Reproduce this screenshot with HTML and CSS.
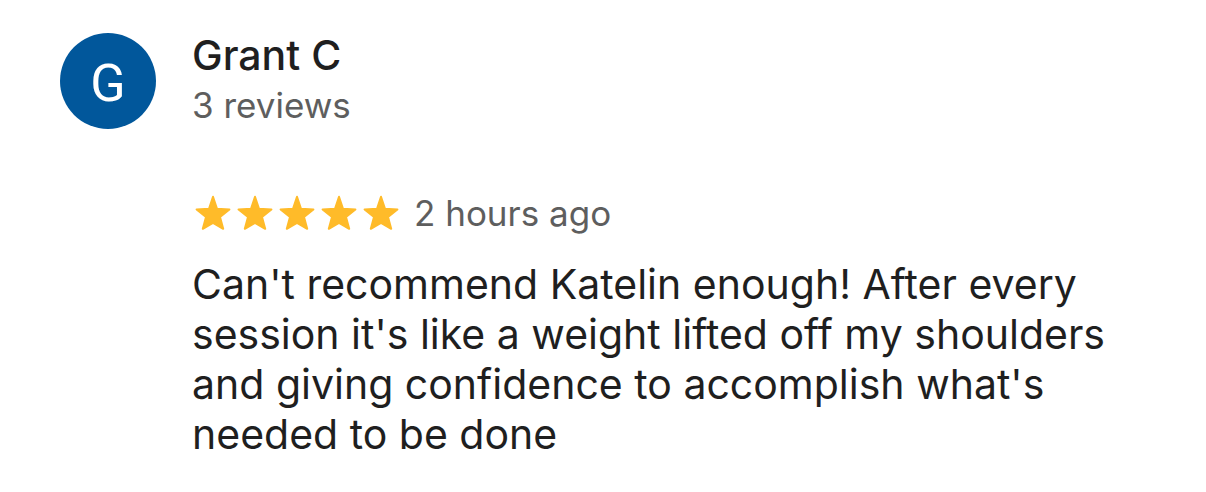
FILE: index.html
```
<!DOCTYPE html>
<html lang="en">
<head>
    <meta charset="UTF-8">
    <meta name="viewport" content="width=device-width, initial-scale=1.0">
    <title>Review by Grant C</title>
    <link rel="stylesheet" href="styles.css">
</head>
<body>
    <svg class="sprite" aria-hidden="true">
        <symbol id="star" viewBox="0 0 36 36">
            <path d="M18 1.8L22 13.8L34.4 14.4L25 22L28.2 33.8L18 27.8L7.8 33.8L11 22L1.6 14.4L14 13.8Z"/>
        </symbol>
    </svg>

    <article class="review">
        <div class="avatar">G</div>

        <div class="content">
            <header class="author">
                <h1>Grant C</h1>
                <p>3 reviews</p>
            </header>

            <div class="rating">
                <div class="stars" role="img" aria-label="5 out of 5 stars">
                    <svg class="star"><use href="#star"/></svg>
                    <svg class="star"><use href="#star"/></svg>
                    <svg class="star"><use href="#star"/></svg>
                    <svg class="star"><use href="#star"/></svg>
                    <svg class="star"><use href="#star"/></svg>
                </div>
                <span class="time">2 hours ago</span>
            </div>

            <p class="text">Can't recommend Katelin enough! After every session it's like a weight lifted off my shoulders and giving confidence to accomplish what's needed to be done</p>
        </div>
    </article>
</body>
</html>
```
FILE: styles.css
```
body {
    font-family: Inter, sans-serif;
    background-color: #fff;
    color: #1f1f1f;
    margin: 0;
}

h1,
p {
    margin: 0;
}

.sprite {
    display: none;
}

.review {
    display: flex;
    align-items: flex-start;
    gap: 36px;
    padding: 33px 96px 32px 60px;
}

.avatar {
    box-sizing: border-box;
    display: flex;
    flex-shrink: 0;
    align-items: center;
    justify-content: center;
    width: 96px;
    height: 96px;
    padding-top: 4px;
    border-radius: 50%;
    background-color: #01579b;
    color: #fff;
    font-family: Roboto, sans-serif;
    font-size: 52px;
}

.content {
    flex: 1;
}

.author h1 {
    font-size: 41px;
    font-weight: 500;
    line-height: 44px;
}

.author p {
    color: #5e5e5e;
    font-size: 35px;
    line-height: 56px;
}

.rating {
    display: flex;
    align-items: center;
    gap: 15px;
    margin-top: 57px;
}

.stars {
    display: flex;
    gap: 6px;
    padding-left: 3px;
}

.star {
    width: 36px;
    height: 36px;
    fill: #ffbb29;
    stroke: #ffbb29;
    stroke-width: 2px;
    stroke-linejoin: round;
}

.time {
    color: #5e5e5e;
    font-size: 35px;
    line-height: 46px;
}

.text {
    margin-top: 23px;
    font-size: 41px;
    line-height: 50px;
}
```
